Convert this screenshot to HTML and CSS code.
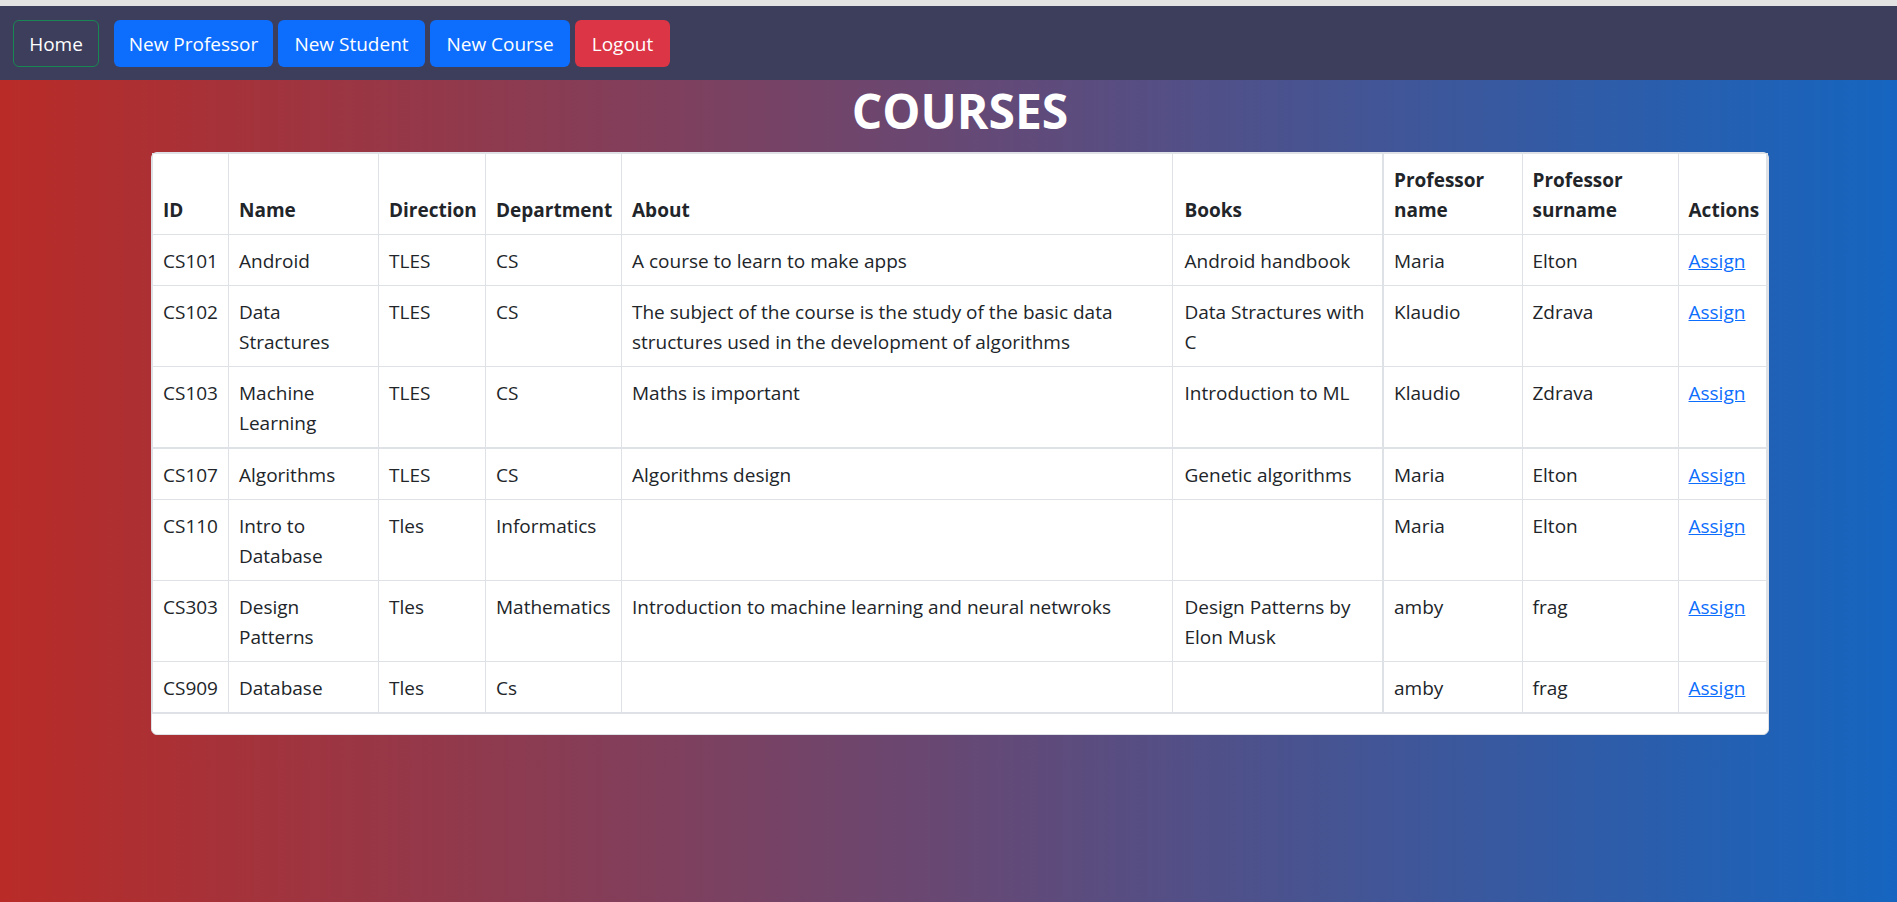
FILE: index.html
```html
<!DOCTYPE html>
<html lang="en">
<head>
<meta charset="utf-8">
<title>Courses</title>
<link rel="stylesheet" href="styles.css">
</head>
<body>
<div class="topbar"></div>
<nav class="navbar">
  <a class="btn btn-home" href="#">Home</a>
  <a class="btn btn-primary w-prof" href="#">New Professor</a>
  <a class="btn btn-primary w-stud" href="#">New Student</a>
  <a class="btn btn-primary w-course" href="#">New Course</a>
  <a class="btn btn-danger w-logout" href="#">Logout</a>
</nav>
<main class="page">
  <div class="container">
    <h1 class="title">COURSES</h1>
    <div class="card">
      <table class="courses">
        <colgroup>
          <col class="c-id"><col class="c-name"><col class="c-dir"><col class="c-dept"><col class="c-about"><col class="c-books"><col class="c-pn"><col class="c-ps"><col class="c-act">
        </colgroup>
        <thead>
          <tr><th>ID</th><th>Name</th><th>Direction</th><th>Department</th><th>About</th><th>Books</th><th class="pn">Professor name</th><th>Professor surname</th><th>Actions</th></tr>
        </thead>
        <tbody>
          <tr><td>CS101</td><td>Android</td><td>TLES</td><td>CS</td><td>A course to learn to make apps</td><td>Android handbook</td><td class="pn">Maria</td><td>Elton</td><td><a class="assign" href="#">Assign</a></td></tr>
          <tr><td>CS102</td><td>Data Stractures</td><td>TLES</td><td>CS</td><td>The subject of the course is the study of the basic data structures used in the development of algorithms</td><td>Data Stractures with C</td><td class="pn">Klaudio</td><td>Zdrava</td><td><a class="assign" href="#">Assign</a></td></tr>
          <tr class="thick"><td>CS103</td><td>Machine Learning</td><td>TLES</td><td>CS</td><td>Maths is important</td><td>Introduction to ML</td><td class="pn">Klaudio</td><td>Zdrava</td><td><a class="assign" href="#">Assign</a></td></tr>
          <tr><td>CS107</td><td>Algorithms</td><td>TLES</td><td>CS</td><td>Algorithms design</td><td>Genetic algorithms</td><td class="pn">Maria</td><td>Elton</td><td><a class="assign" href="#">Assign</a></td></tr>
          <tr><td>CS110</td><td>Intro to Database</td><td>Tles</td><td>Informatics</td><td></td><td></td><td class="pn">Maria</td><td>Elton</td><td><a class="assign" href="#">Assign</a></td></tr>
          <tr><td>CS303</td><td>Design Patterns</td><td>Tles</td><td>Mathematics</td><td>Introduction to machine learning and neural netwroks</td><td>Design Patterns by Elon Musk</td><td class="pn">amby</td><td>frag</td><td><a class="assign" href="#">Assign</a></td></tr>
          <tr class="thick"><td>CS909</td><td>Database</td><td>Tles</td><td>Cs</td><td></td><td></td><td class="pn">amby</td><td>frag</td><td><a class="assign" href="#">Assign</a></td></tr>
        </tbody>
      </table>
    </div>
  </div>
</main>
</body>
</html>
```
FILE: styles.css
```css
html, body {
  margin: 0;
  padding: 0;
}

body {
  font-family: "Open Sans", "Noto Sans", sans-serif;
  font-size: 19px;
  line-height: 30px;
  color: #212529;
  background: linear-gradient(to right, #b92b27, #1565c0);
  min-height: 902px;
}

.topbar {
  height: 6px;
  background: #e3e3e3;
}

.navbar {
  display: flex;
  align-items: flex-start;
  gap: 5px;
  height: 74px;
  box-sizing: border-box;
  padding: 14px 13px 0;
  background: #3d3e5c;
}

.btn {
  display: inline-flex;
  align-items: center;
  justify-content: center;
  height: 47px;
  box-sizing: border-box;
  padding: 0;
  border: 1px solid transparent;
  border-radius: 6px;
  color: #fff;
  text-decoration: none;
  font-size: 19px;
  line-height: 30px;
  white-space: nowrap;
}

.btn-home {
  border-color: #198754;
  width: 86px;
  margin-right: 10px;
}

.btn-primary { background: #0d6efd; }
.btn-danger { background: #dc3545; }

.w-prof { width: 159px; }
.w-stud { width: 147px; }
.w-course { width: 140px; }
.w-logout { width: 95px; }

.page {
  padding-left: 151px;
}

.container {
  width: 1618px;
}

.title {
  margin: 1px 0 11px;
  text-align: center;
  font-size: 48px;
  line-height: 60px;
  font-weight: 700;
  color: #fff;
}

.card {
  background: #fff;
  border: 1px solid #dee2e6;
  border-radius: 6px;
  padding-bottom: 20px;
}

.courses {
  width: 100%;
  border-collapse: collapse;
  table-layout: fixed;
}

.courses th,
.courses td {
  border: 1px solid #dee2e6;
  padding: 11px 10px 9px;
  text-align: left;
  vertical-align: top;
}

.courses th {
  vertical-align: bottom;
  font-weight: 700;
}

.courses .pn {
  border-left-width: 2px;
}

.courses tr.thick td {
  border-bottom-width: 2px;
}

.courses tr > :last-child {
  border-right-width: 2px;
}

.c-id { width: 76px; }
.c-name { width: 150px; }
.c-dir { width: 107px; }
.c-dept { width: 136px; }
.c-books { width: 211px; }
.c-pn { width: 139px; }
.c-ps { width: 156px; }
.c-act { width: 89px; }

.courses td:nth-child(6),
.courses th:nth-child(6) {
  padding-left: 12px;
}

.assign {
  color: #0d6efd;
  text-decoration: underline;
}
```
